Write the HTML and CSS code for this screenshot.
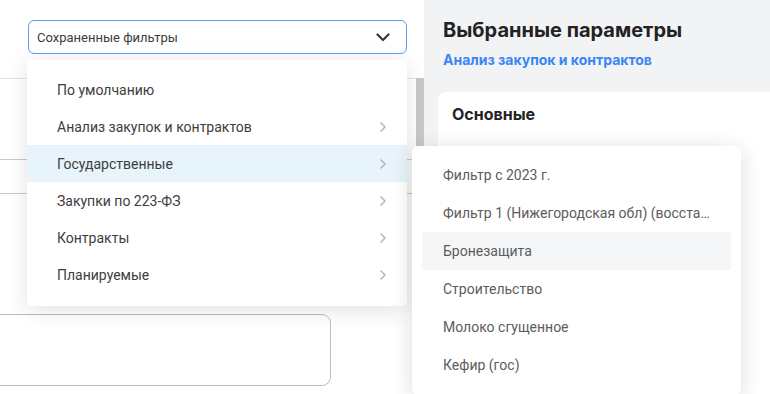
FILE: index.html
```html
<!DOCTYPE html>
<html lang="ru">
<head>
  <meta charset="UTF-8" />
  <title>Сохраненные фильтры</title>
  <link rel="stylesheet" href="styles.css">
</head>
<body>
  <aside class="sidebar">
    <div class="sidebar-head">
      <div class="select">
        <span>Сохраненные фильтры</span>
        <svg class="select-arrow" width="14" height="9" viewBox="0 0 14 9"><path d="M1.5 1.5l5.5 5.5 5.5-5.5" fill="none" stroke="#3a3a3a" stroke-width="2.2" stroke-linecap="round" stroke-linejoin="round"/></svg>
      </div>
    </div>

    <div class="form-row tall"></div>
    <div class="form-row"></div>
    <div class="note"></div>

    <div class="scroll-thumb"></div>

    <div class="menu">
      <div class="menu-item">По умолчанию</div>
      <div class="menu-item">Анализ закупок и контрактов
        <svg class="chev" width="8" height="12" viewBox="0 0 8 12"><path d="M1.5 1.5l4.5 4.5-4.5 4.5" fill="none" stroke="#b8b8b8" stroke-width="1.5"/></svg>
      </div>
      <div class="menu-item active">Государственные
        <svg class="chev" width="8" height="12" viewBox="0 0 8 12"><path d="M1.5 1.5l4.5 4.5-4.5 4.5" fill="none" stroke="#b8b8b8" stroke-width="1.5"/></svg>
      </div>
      <div class="menu-item">Закупки по 223-ФЗ
        <svg class="chev" width="8" height="12" viewBox="0 0 8 12"><path d="M1.5 1.5l4.5 4.5-4.5 4.5" fill="none" stroke="#b8b8b8" stroke-width="1.5"/></svg>
      </div>
      <div class="menu-item">Контракты
        <svg class="chev" width="8" height="12" viewBox="0 0 8 12"><path d="M1.5 1.5l4.5 4.5-4.5 4.5" fill="none" stroke="#b8b8b8" stroke-width="1.5"/></svg>
      </div>
      <div class="menu-item">Планируемые
        <svg class="chev" width="8" height="12" viewBox="0 0 8 12"><path d="M1.5 1.5l4.5 4.5-4.5 4.5" fill="none" stroke="#b8b8b8" stroke-width="1.5"/></svg>
      </div>

      <div class="submenu">
        <div class="sub-item">Фильтр с 2023 г.</div>
        <div class="sub-item">Фильтр 1 (Нижегородская обл) (восста…</div>
        <div class="sub-item hover">Бронезащита</div>
        <div class="sub-item">Строительство</div>
        <div class="sub-item">Молоко сгущенное</div>
        <div class="sub-item">Кефир (гос)</div>
      </div>
    </div>
  </aside>

  <main class="params">
    <h1>Выбранные параметры</h1>
    <a class="params-link">Анализ закупок и контрактов</a>
    <section class="card">
      <h2>Основные</h2>
    </section>
  </main>
</body>
</html>
```

FILE: styles.css
```css
* {
  box-sizing: border-box;
  margin: 0;
  padding: 0;
}

html, body {
  height: 100%;
  overflow: hidden;
}

body {
  display: flex;
  font-family: Roboto, 'Noto Sans', sans-serif;
  color: #333;
  background: #fff;
}

.sidebar {
  position: relative;
  width: 424px;
  flex-shrink: 0;
  background: #fff;
}

.sidebar-head {
  height: 79px;
  padding: 20px 17px 0 28px;
  border-bottom: 1px solid #e4e4e4;
}

.select {
  height: 34px;
  display: flex;
  align-items: center;
  justify-content: space-between;
  padding: 0 16px 0 8px;
  border: 1px solid #5b9ef0;
  border-radius: 6px;
  font-size: 13px;
  color: #3a3a3a;
}

.form-row {
  height: 34px;
  border-bottom: 1px solid #c9c9d2;
}

.form-row.tall {
  height: 81px;
}

.note {
  width: 331px;
  height: 72px;
  margin-top: 120px;
  border: 1px solid #bcbcc4;
  border-left: none;
  border-radius: 0 9px 9px 0;
}

.scroll-thumb {
  position: absolute;
  right: 0;
  top: 78px;
  width: 8px;
  height: 312px;
  background: #c9c9c9;
}

.menu {
  position: absolute;
  left: 27px;
  top: 60px;
  width: 380px;
  padding: 11px 0 13px;
  background: #fff;
  border-radius: 4px;
  box-shadow: 0 4px 22px rgba(0, 0, 0, 0.12);
  z-index: 10;
}

.menu-item {
  height: 37px;
  display: flex;
  align-items: center;
  justify-content: space-between;
  padding: 0 20px 0 30px;
  font-size: 14px;
  color: #3d3d3d;
}

.menu-item.active {
  background: #e8f4fb;
}

.submenu {
  position: absolute;
  left: 385px;
  top: 86px;
  width: 329px;
  padding: 10px 10px 11px;
  background: #fff;
  border-radius: 6px;
  box-shadow: 0 4px 22px rgba(0, 0, 0, 0.14);
}

.sub-item {
  height: 38px;
  line-height: 38px;
  padding: 0 16px 0 21px;
  font-size: 14px;
  color: #5c5c5c;
  white-space: nowrap;
}

.sub-item.hover {
  background: #f5f6f8;
}

.params {
  flex: 1;
  display: flex;
  flex-direction: column;
  padding: 17px 0 0 14px;
  background: #f2f3f5;
  font-family: Inter, Roboto, sans-serif;
}

.params h1 {
  padding-left: 5px;
  font-size: 20px;
  line-height: 26px;
  font-weight: 700;
  color: #222;
}

.params-link {
  padding-left: 5px;
  margin-top: 8px;
  font-size: 14px;
  line-height: 17px;
  font-weight: 700;
  color: #3b86f2;
}

.card {
  flex: 1;
  margin-top: 24px;
  padding: 13px 14px;
  background: #fff;
  border-radius: 8px 0 0 0;
}

.card h2 {
  font-size: 16px;
  line-height: 19px;
  font-weight: 700;
  color: #222;
}
```
